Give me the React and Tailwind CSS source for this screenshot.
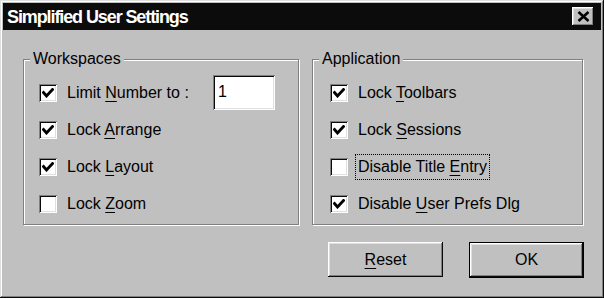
import React from 'react';

const raised = 'shadow-[inset_-1px_-1px_#0a0a0a,inset_1px_1px_#ffffff,inset_-2px_-2px_#808080,inset_2px_2px_#dfdfdf]';
const sunken = 'shadow-[inset_1px_1px_#808080,inset_-1px_-1px_#ffffff,inset_2px_2px_#0a0a0a,inset_-2px_-2px_#dfdfdf]';

const Check = ({ checked }) => (
  <div className={`w-[18px] h-[18px] bg-white shrink-0 flex items-center justify-center ${sunken}`}>
    {checked && (
      <svg width="12" height="10" viewBox="0 0 12 10">
        <polyline points="1.5,4.5 4.5,8 10.5,1.5" fill="none" stroke="#000" strokeWidth="2.8" strokeLinecap="square" />
      </svg>
    )}
  </div>
);

// label with one underlined mnemonic letter
const Label = ({ pre, key_, post }) => (
  <>
    {pre}
    <span className="underline underline-offset-[3px] decoration-1">{key_}</span>
    {post}
  </>
);

const Row = ({ checked, children }) => (
  <div className="h-[37px] flex items-center">
    <Check checked={checked} />
    {children}
  </div>
);

const Group = ({ title, width, pl, children }) => (
  <div className={`relative h-[166px] border border-[#808080] shadow-[1px_1px_0_#ffffff,inset_1px_1px_0_#ffffff] ${width}`}>
    <span className="absolute top-[-10px] left-[6px] bg-[#c0c0c0] px-[3px] leading-[18px]">{title}</span>
    <div className={`pt-[14px] ${pl}`}>{children}</div>
  </div>
);

export default function App() {
  return (
    <div className="w-[604px] h-[298px] bg-[#c0c0c0] p-[3px] flex flex-col text-[16px] text-black font-['Liberation_Sans',Arial,sans-serif] shadow-[inset_-1px_-1px_#0a0a0a,inset_1px_1px_#dfdfdf,inset_-2px_-2px_#808080,inset_2px_2px_#ffffff]">
      {/* Title bar */}
      <div className="h-[27px] bg-[#0c0c0c] flex items-center justify-between pl-[4px] pr-[7px]">
        <span className="text-white font-bold text-[18px] tracking-[-1.1px] leading-none">Simplified User Settings</span>
        <div className={`w-[22px] h-[19px] bg-[#c0c0c0] flex items-center justify-center ${raised}`}>
          <svg width="13" height="11" viewBox="0 0 13 11">
            <path d="M1.5 1 L11.5 10 M11.5 1 L1.5 10" stroke="#000" strokeWidth="2.6" />
          </svg>
        </div>
      </div>

      {/* Body */}
      <div className="flex-1 pl-[20px] pt-[29px]">
        <div className="flex gap-[13px]">
          <Group title="Workspaces" width="w-[276px]" pl="pl-[15px]">
            <Row checked>
              <span className="ml-[10px] w-[146px]"><Label pre="Limit " key_="N" post="umber to :" /></span>
              <div className={`w-[62px] h-[35px] bg-white flex items-start pt-[5px] pl-[5px] ${sunken}`}>1</div>
            </Row>
            <Row checked>
              <span className="ml-[10px]"><Label pre="Lock " key_="A" post="rrange" /></span>
            </Row>
            <Row checked>
              <span className="ml-[10px]"><Label pre="Lock " key_="L" post="ayout" /></span>
            </Row>
            <Row>
              <span className="ml-[10px]"><Label pre="Lock " key_="Z" post="oom" /></span>
            </Row>
          </Group>

          <Group title="Application" width="w-[271px]" pl="pl-[17px]">
            <Row checked>
              <span className="ml-[10px]"><Label pre="Lock " key_="T" post="oolbars" /></span>
            </Row>
            <Row checked>
              <span className="ml-[10px]"><Label pre="Lock " key_="S" post="essions" /></span>
            </Row>
            <Row>
              <span className="ml-[7px] border border-dotted border-black px-[2px] py-[2px] leading-[20px]">
                <Label pre="Disable Title " key_="E" post="ntry" />
              </span>
            </Row>
            <Row checked>
              <span className="ml-[10px]"><Label pre="Disable " key_="U" post="ser Prefs Dlg" /></span>
            </Row>
          </Group>
        </div>

        {/* Buttons */}
        <div className="mt-[17px] flex justify-end gap-[26px] pr-[17px]">
          <button className={`w-[115px] h-[35px] bg-[#c0c0c0] ${raised}`}>
            <Label pre="" key_="R" post="eset" />
          </button>
          <button className={`w-[115px] h-[36px] bg-[#c0c0c0] border border-black ${raised}`}>
            OK
          </button>
        </div>
      </div>
    </div>
  );
}
